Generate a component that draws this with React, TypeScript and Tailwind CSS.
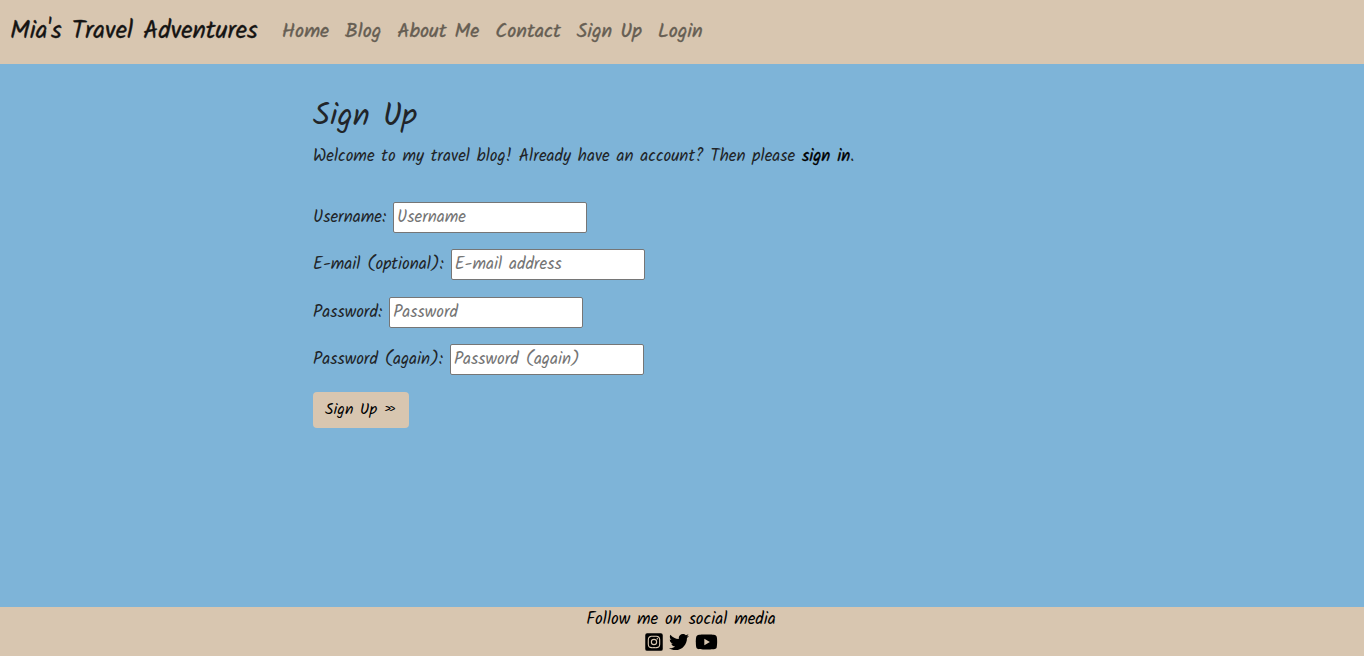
import { FaInstagramSquare, FaTwitter, FaYoutube } from 'react-icons/fa';

const links = ['Home', 'Blog', 'About Me', 'Contact', 'Sign Up', 'Login'];

const fields = [
  { id: 'username', label: 'Username:', placeholder: 'Username', type: 'text' },
  { id: 'email', label: 'E-mail (optional):', placeholder: 'E-mail address', type: 'email' },
  { id: 'password1', label: 'Password:', placeholder: 'Password', type: 'password' },
  { id: 'password2', label: 'Password (again):', placeholder: 'Password (again)', type: 'password' },
];

const socials = [
  { name: 'Instagram', Icon: FaInstagramSquare, size: 'w-[18px]' },
  { name: 'Twitter', Icon: FaTwitter, size: 'w-5' },
  { name: 'YouTube', Icon: FaYoutube, size: 'w-[23px]' },
];

export default function App() {
  return (
    <div className="flex min-h-screen flex-col bg-[#7eb4d8] font-[Kalam,Lato,sans-serif] text-[17px] leading-6 font-normal text-[#212529]">
      <nav className="flex h-16 items-center gap-6 bg-[#d8c6b0] px-[10px] whitespace-nowrap [-webkit-text-stroke:thin]">
        <a href="#" className="pb-[2px] text-[25px] leading-9 text-[#151413]">
          Mia's Travel Adventures
        </a>
        <ul className="flex gap-4 text-[20px] leading-7 text-[#665e53]">
          {links.map((link) => (
            <li key={link}>
              <a href="#">{link}</a>
            </li>
          ))}
        </ul>
      </nav>

      <main className="mx-auto w-full max-w-[738px] flex-1 pt-8">
        <h1 className="text-[32px] leading-[42px] font-normal">Sign Up</h1>
        <p className="mt-[7px] leading-6">
          Welcome to my travel blog! Already have an account? Then please{' '}
          <a href="#" className="text-black [-webkit-text-stroke:thin]">
            sign in
          </a>
          .
        </p>
        <form className="mt-[33px]" onSubmit={(e) => e.preventDefault()}>
          <div className="flex h-[173px] flex-col justify-between">
            {fields.map((f) => (
              <div key={f.id} className="flex gap-[7px] whitespace-nowrap">
                <label htmlFor={f.id} className="pt-1">
                  {f.label}
                </label>
                <input
                  id={f.id}
                  type={f.type}
                  placeholder={f.placeholder}
                  className="h-[31px] w-[194px] rounded-xs border border-[#767676] bg-white px-[3px] placeholder:text-[#757575]"
                />
              </div>
            ))}
          </div>
          <button type="submit" className="mt-[17px] h-9 rounded bg-[#d8c6b0] px-3 text-[16px] text-black">
            Sign Up »
          </button>
        </form>
      </main>

      <footer className="flex h-[49px] flex-col items-center bg-[#d8c6b0] pt-px pr-[2px] text-black">
        <p>Follow me on social media</p>
        <div className="flex items-center gap-[6px]">
          {socials.map(({ name, Icon, size }) => (
            <a key={name} href="#" aria-label={name}>
              <Icon className={`${size} h-5`} />
            </a>
          ))}
        </div>
      </footer>
    </div>
  );
}
